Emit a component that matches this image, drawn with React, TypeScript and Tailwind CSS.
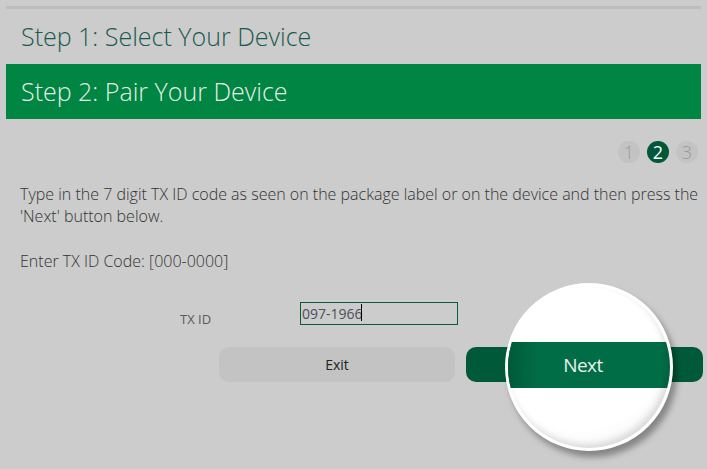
import { useState } from "react";

const font = { fontFamily: '"Open Sans", "Liberation Sans", sans-serif' };

function StepDots() {
  return (
    <div className="flex justify-end gap-[7px] pr-[3px] pt-[22px]">
      <span className="w-[22px] h-[22px] rounded-full bg-[#c3c3c3] text-[#9a9a9a] text-[18px] font-light flex items-center justify-center">1</span>
      <span className="w-[22px] h-[22px] rounded-full bg-[#00573a] text-white text-[18px] flex items-center justify-center">2</span>
      <span className="w-[22px] h-[22px] rounded-full bg-[#c3c3c3] text-[#9a9a9a] text-[18px] font-light flex items-center justify-center">3</span>
    </div>
  );
}

export default function App() {
  const [txId, setTxId] = useState("097-1966");

  return (
    <div className="relative w-[707px] h-[469px] overflow-hidden bg-[#cccccc] px-[6px]" style={font}>
      <div className="mt-[6px] h-[3px] bg-[#bdbdbd]" />
      <div className="h-[55px] flex items-center px-[15px] text-[25px] font-light text-[#1a5a4e]">
        Step 1: Select Your Device
      </div>
      <div className="h-[55px] flex items-center px-[15px] text-[25px] font-light text-[#e6efe9] bg-[#008542]">
        Step 2: Pair Your Device
      </div>

      <StepDots />

      <div className="pl-[14px] pr-[1px] pt-[20px] text-[16px] font-light leading-[22px] text-[#333333]">
        <p>Type in the 7 digit TX ID code as seen on the package label or on the device and then press the 'Next' button below.</p>
        <p className="mt-[23px]">Enter TX ID Code: [000-0000]</p>
      </div>

      <div className="flex items-center mt-[29px] h-[23px]">
        <span className="w-[294px] pl-[174px] text-[13px] text-[#5a5a5a] pt-[14px]">TX ID</span>
        <div className="relative">
          <input
            value={txId}
            onChange={(e) => setTxId(e.target.value)}
            className="w-[158px] h-[23px] border border-[#0b5a3c] bg-transparent px-[1px] text-[14px] text-[#4a4f5a] outline-none"
            style={font}
          />
          <span className="absolute left-[61px] top-[3px] w-px h-[17px] bg-black" />
        </div>
      </div>

      <div className="flex gap-[11px] mt-[23px] pl-[213px]">
        <button className="shrink-0 w-[236px] h-[35px] rounded-[10px] bg-[#c3c3c3] text-[14px] text-[#222]">Exit</button>
        <button className="shrink-0 w-[237px] h-[35px] rounded-[10px] bg-[#005a3a] text-[14px] text-white">Next</button>
      </div>

      {/* magnifier lens over the Next button */}
      <div className="absolute left-[505px] top-[283px] w-[168px] h-[168px] rounded-full border-[3px] border-white bg-white overflow-hidden shadow-[4px_6px_6px_rgba(0,0,0,0.35)]">
        <div className="absolute inset-0 rounded-full bg-[radial-gradient(circle_at_45%_40%,#ffffff_60%,#ececec_100%)]" />
        <div className="absolute left-0 right-0 top-[56px] h-[46px] bg-[#006d46] flex items-center justify-center pr-[12px]">
          <span className="text-[19px] text-[#e8f1ec] tracking-[-0.5px]">Next</span>
        </div>
        <div className="absolute left-0 top-[56px] w-[30px] h-[46px] bg-gradient-to-r from-[#005a3a] to-transparent" />
        <div className="absolute inset-0 rounded-full shadow-[inset_-3px_-4px_6px_rgba(0,0,0,0.12)]" />
      </div>
    </div>
  );
}
